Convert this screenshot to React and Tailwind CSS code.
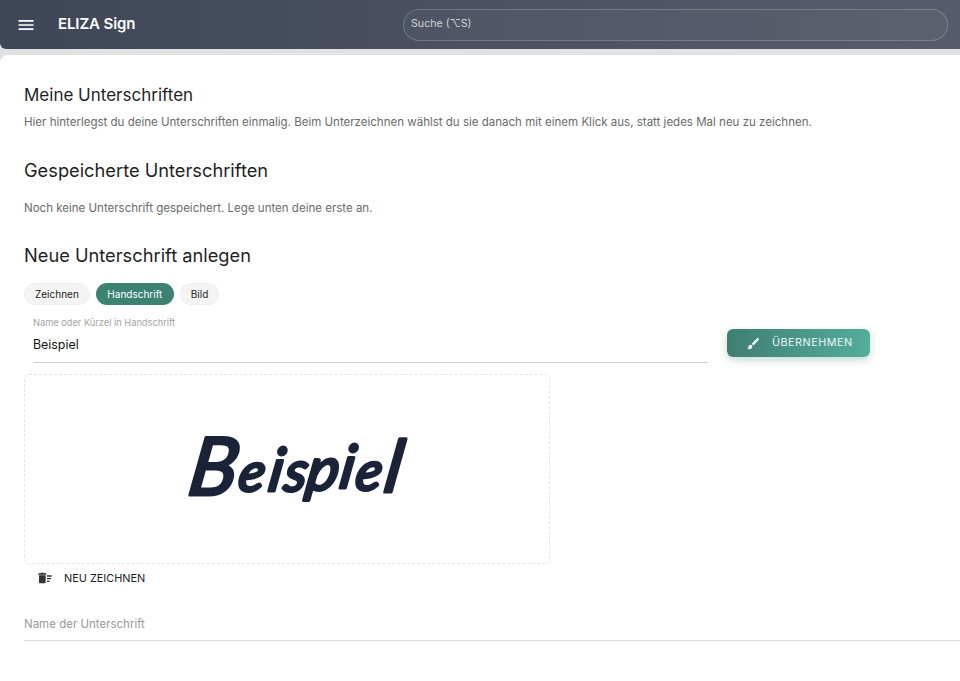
import React from "react";
import { MdMenu, MdBrush, MdDeleteSweep } from "react-icons/md";

function Chip({ children, active }) {
  return (
    <button
      className={
        active
          ? "h-[22px] px-[11.5px] rounded-full bg-[#3c8273] text-white text-[10px] leading-none"
          : "h-[22px] px-[10px] rounded-full bg-[#f4f4f4] border border-[#eeeeee] text-[#222222] text-[10px] leading-none"
      }
    >
      {children}
    </button>
  );
}

const letters = [
  ["B", 180, 120, 80],
  ["e", 230, 116, 54],
  ["i", 260, 116, 60],
  ["s", 276, 116, 56],
  ["p", 298, 115, 60],
  ["i", 331, 113, 60],
  ["e", 347, 115, 54],
  ["l", 376, 117, 72],
];

export default function App() {
  return (
    <div className="w-[960px] h-[681px] overflow-hidden bg-[#dfe1e2] font-['Inter',sans-serif] flex flex-col">
      <header className="h-[49px] shrink-0 flex items-center rounded-bl-[6px] bg-gradient-to-r from-[#3f4657] to-[#565c6b] text-white">
        <div className="w-[52px] flex justify-center">
          <MdMenu className="w-[20px] h-[20px]" />
        </div>
        <div className="w-[351px] pl-[6px] text-[15px] font-semibold tracking-[-0.1px]">ELIZA Sign</div>
        <div className="w-[545px] h-[32px] rounded-full border border-white/20 bg-white/[0.03] flex items-center px-[7px] text-[10.7px] text-[#d2d4d9]">
          Suche (⌥S)
        </div>
      </header>

      <main className="mt-[6px] flex-1 rounded-tl-[8px] bg-white pl-[24px] pt-[29px]">
        <h1 className="text-[17px] leading-[22px] text-[#1f1f1f]">Meine Unterschriften</h1>
        <p className="mt-[8px] text-[11.53px] leading-[16px] text-[#6b6b6b]">
          Hier hinterlegst du deine Unterschriften einmalig. Beim Unterzeichnen wählst du sie danach mit einem Klick aus, statt jedes Mal neu zu zeichnen.
        </p>

        <h2 className="mt-[28px] text-[18.25px] leading-[24px] text-[#1f1f1f]">Gespeicherte Unterschriften</h2>
        <p className="mt-[18px] text-[11.53px] leading-[16px] text-[#6b6b6b]">
          Noch keine Unterschrift gespeichert. Lege unten deine erste an.
        </p>

        <h2 className="mt-[27px] text-[18.25px] leading-[24px] text-[#1f1f1f]">Neue Unterschrift anlegen</h2>

        <div className="mt-[16px] flex gap-[6px]">
          <Chip>Zeichnen</Chip>
          <Chip active>Handschrift</Chip>
          <Chip>Bild</Chip>
        </div>

        <div className="flex items-start">
          <div className="ml-[9px] w-[675px] mt-[12px] border-b border-[#cfcfcf] h-[46px]">
            <div className="text-[9.25px] leading-[12px] text-[#a3a3a3]">Name oder Kürzel in Handschrift</div>
            <div className="mt-[7px] text-[12.4px] leading-[18px] text-[#111111]">Beispiel</div>
          </div>
          <button className="ml-[19px] mt-[24px] w-[143px] h-[28px] rounded-[6px] bg-gradient-to-r from-[#3f7f72] to-[#55ad9c] text-white/90 text-[10.8px] tracking-[0.5px] shadow-[0_3px_8px_rgba(60,130,115,0.3)] flex items-center pl-[19px] pt-px">
            <MdBrush className="w-[15px] h-[15px] mr-[11px]" />
            ÜBERNEHMEN
          </button>
        </div>

        <div className="mt-[11px] w-[526px] h-[190px] rounded-[5px] border border-dashed border-[#e6e6e6]">
          <svg viewBox="0 0 524 188" className="w-full h-full">
            <text
              transform="skewX(-9)"
              fill="#1b2338"
              stroke="#1b2338"
              strokeWidth="3.2"
              strokeLinejoin="round"
              strokeLinecap="round"
              fontFamily="Lato, sans-serif"
              fontStyle="italic"
              fontWeight="400"
            >
              {letters.map(([c, x, y, s], i) => (
                <tspan key={i} x={x} y={y} fontSize={s}>
                  {c}
                </tspan>
              ))}
            </text>
          </svg>
        </div>

        <div className="mt-[5px] ml-[13px] h-[18px] flex items-center text-[10.9px] text-[#222222]">
          <MdDeleteSweep className="w-[16px] h-[16px] text-[#333333] mr-[11px]" />
          NEU ZEICHNEN
        </div>

        <div className="mt-[29px] h-[25px] border-b border-[#d9d9d9] text-[11.5px] leading-[16px] text-[#9a9a9a]">Name der Unterschrift</div>
      </main>
    </div>
  );
}
